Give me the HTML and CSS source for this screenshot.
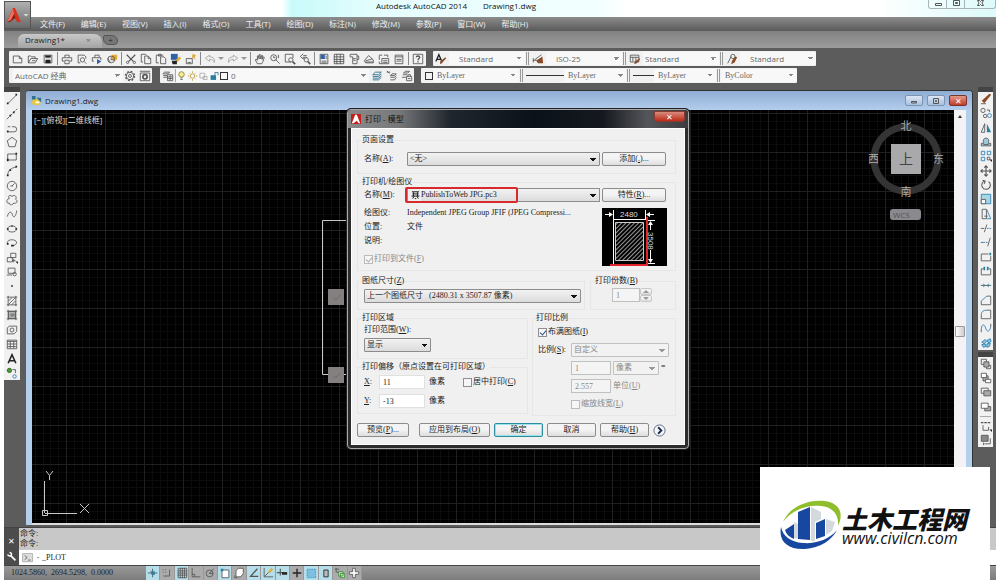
FILE: index.html
```html
<!DOCTYPE html>
<html lang="zh-CN">
<head>
  <meta charset="UTF-8">
  <meta name="viewport" content="width=device-width, initial-scale=1.0">
  <title>Autodesk AutoCAD 2014 - Drawing1.dwg</title>
  <link rel="stylesheet" href="styles.css">
</head>
<body>
  <div class="app">
    <button class="app-button" aria-label="应用程序菜单">
      <svg class="app-logo" viewBox="0 0 16 16"><path fill="#d8321f" d="M7 1h2l6 14h-4L8 7z"/><path fill="#8f150f" d="M7 1 1 15h3l5-4 2 4L8 7z"/><path fill="#f0705a" d="M7 1 1 15l4-2 3-6z"/></svg>
      <span class="caret light"></span>
    </button>

    <header class="titlebar">
      <div class="title"><span>Autodesk AutoCAD 2014</span><span>Drawing1.dwg</span></div>
      <div class="window-controls">
        <button aria-label="最小化"><svg viewBox="0 0 14 8"><path d="M4.500 3.500h6v2h-6z"/></svg></button>
        <button aria-label="还原"><svg viewBox="0 0 14 8"><path d="M4.500 .5h6v5h-6zM6.500 2.500h2v1h-2z"/></svg></button>
        <button class="wide" aria-label="关闭"><svg viewBox="0 0 14 8"><path d="M4.500 .5h2l1 1 1-1h2L9 3l1.500 2.500h-2l-1-1-1 1h-2L6 3z"/></svg></button>
      </div>
    </header>

    <nav class="menubar">
      <a href="#">文件(F)</a>
      <a href="#">编辑(E)</a>
      <a href="#">视图(V)</a>
      <a href="#">插入(I)</a>
      <a href="#">格式(O)</a>
      <a href="#">工具(T)</a>
      <a href="#">绘图(D)</a>
      <a href="#">标注(N)</a>
      <a href="#">修改(M)</a>
      <a href="#">参数(P)</a>
      <a href="#">窗口(W)</a>
      <a href="#">帮助(H)</a>
    </nav>

    <div class="tabs">
      <a class="tab" href="#">Drawing1*<span class="tab-close">×</span></a>
      <button class="tab-add" aria-label="新建">+</button>
    </div>

    <!-- Toolbars -->
    <div class="toolbars">
      <div class="toolbar-row">
        <div class="toolbar standard">
          <button aria-label="新建"><svg viewBox="0 0 14 14"><path d="M1.500 3.500h7l3 3v5h-10zM8.500 3.500v3h3"/></svg></button>
          <button aria-label="打开"><svg viewBox="0 0 14 14"><path d="M1.500 11.500v-8h3l1 1h4v2M1.500 11.500l3-5h8l-3 5zM6 9h4"/></svg></button>
          <button aria-label="保存"><svg viewBox="0 0 14 14"><path d="M2.500 2.500h9v9h-9zM4.500 2.500v3h5v-3"/><path class="dark" d="M4 8h6v4H4zM4 3h6v2H4z"/></svg></button>
          <i class="sep"></i>
          <button aria-label="打印"><svg viewBox="0 0 14 14"><path d="M4.500 5V2.500h5V5M3.500 9.500h-2v-4h11v4h-2M4.500 8.500h5v4h-5z"/></svg></button>
          <button aria-label="打印预览"><svg viewBox="0 0 14 14"><path d="M5 11.500H2.500v-9h7l2 2v2"/><circle cx="7.500" cy="8" r="2.500"/><path d="m9.500 10 2.500 2.500"/></svg></button>
          <button aria-label="发布"><svg viewBox="0 0 14 14"><path d="M4.500 5V2.500h5V5M3.500 9.500h-2v-4h10v3"/><path class="blue" d="m7 7 5 3-5 3z"/></svg></button>
          <button aria-label="三维打印"><svg viewBox="0 0 14 14"><path class="gold" d="M7 2h6v5l-3 3-3-3z"/><circle cx="6" cy="7.500" r="4"/><path d="M6 4v4h3M2 6l3 5"/></svg></button>
          <i class="sep"></i>
          <button aria-label="剪切"><svg viewBox="0 0 14 14"><path stroke-width="1.400" d="m2 2 8 8M12 2l-8 8"/><circle cx="3" cy="11" r="1.300"/><circle cx="11" cy="11" r="1.300"/></svg></button>
          <button aria-label="复制"><svg viewBox="0 0 14 14"><path d="M3.500 10.500h-2v-9h5l1 1M5.500 3.500h4l3 3v6h-7zM9.500 3.500v3h3"/></svg></button>
          <button aria-label="粘贴"><svg viewBox="0 0 14 14"><path d="M4.500 11.500h-3v-9h8M4 1.500h3v2H4zM6.500 4.500h4l2 2v6h-6z"/></svg></button>
          <button aria-label="特性匹配"><svg viewBox="0 0 14 14"><path class="blue" d="M1 1h8v7H1z"/><path class="gold" d="m6 9 5-5 2 2-5 5z"/><path class="dark" d="M2 9h6v4H3z"/></svg></button>
          <button aria-label="块编辑器"><svg viewBox="0 0 14 14"><path d="M1.500 6.500h7v6h-7zM3 11h4"/><path class="gold" d="m9 1 4 2-2 2 2 3-5-3z"/></svg></button>
          <i class="sep"></i>
          <button aria-label="放弃"><svg class="faded" viewBox="0 0 14 14"><path d="M6.500 2.500 1.500 6l5 3.500v-2c3 0 5 1 5.500 3.500 1-4-1-6.500-5.500-6.500z"/></svg></button>
          <button class="narrow" aria-label="放弃列表"><span class="caret faint"></span></button>
          <button aria-label="重做"><svg class="faded" viewBox="0 0 14 14"><path d="m7.500 2.500 5 3.500-5 3.500v-2C4.500 7.500 2.500 8.500 2 11c-1-4 1-6.500 5.500-6.500z"/></svg></button>
          <button class="narrow" aria-label="重做列表"><span class="caret faint"></span></button>
          <i class="sep"></i>
          <button aria-label="实时平移"><svg viewBox="0 0 14 14"><path d="M4 12.500 1.500 8 2.500 7 4 8.500v-5l1-.5 1 4V2l1-.5L8 7l1-4.500 1 .5-.5 4.500 1.500-3 1 .5-1.500 5-1.500 2.500z"/></svg></button>
          <button aria-label="实时缩放"><svg viewBox="0 0 14 14"><circle cx="5.500" cy="5.500" r="3.500"/><path d="m8 8 4.500 4.500M5.500 3.500v2h2M11 2v4"/></svg></button>
          <button aria-label="窗口缩放"><svg viewBox="0 0 14 14"><path d="M8 10.500H1.500v-9h9V6"/><circle cx="8" cy="8" r="2.500"/><path stroke-width="2" d="m10 10 3 3"/></svg></button>
          <button aria-label="缩放上一个"><svg viewBox="0 0 14 14"><path d="M5 1 1.500 4 5 7V5h4M5 3h4"/><circle cx="8.500" cy="8" r="2.500"/><path stroke-width="2" d="m10.500 10 2.500 3"/></svg></button>
          <i class="sep"></i>
          <button aria-label="特性"><svg viewBox="0 0 14 14"><path d="M2.500 1.500h9v11h-9z"/><path class="blue" d="M3 2h5v5H3z"/><path d="M4 9.500h6M4 11.500h6M9.500 3v4"/></svg></button>
          <button aria-label="设计中心"><svg viewBox="0 0 14 14"><path d="M1.500 1.500h11v11h-11zM1 4.500h12M1 7.500h12M1 10h12M4.500 1v12M8.500 1v12"/></svg></button>
          <button aria-label="工具选项板"><svg viewBox="0 0 14 14"><path d="M2.500 1.500h8v11h-5v-8h-3zM10.500 3.500h2v4h-2M6 6.500h3M6 8.500h3"/></svg></button>
          <button aria-label="图纸集"><svg viewBox="0 0 14 14"><path d="m1.500 9 5-6 5.500 5v3.500h-9zM3 9l8-2M3 10.500h9"/></svg></button>
          <button aria-label="标记集"><svg viewBox="0 0 14 14"><path d="M1.500 8V2.500H5M7 2.500h4.500V5M4.500 6.500h8v6h-8zM1.500 10v2.500h3M6 9h5M6 11h5"/></svg></button>
          <button aria-label="计算器"><svg viewBox="0 0 14 14"><path d="M2.500 2.500h9v10h-9zM2.500 4.500h9M4 7.500h6M4 9.500h6"/></svg></button>
          <i class="sep"></i>
          <button aria-label="帮助"><svg viewBox="0 0 14 14"><path d="M1.500 1.500h11v11h-11z"/><path stroke-width="1.500" d="M5 5c0-2 4-2 4 0 0 1.500-2 1.500-2 3.500M7 9.500v1.500"/></svg></button>
        </div>
        <div class="toolbar styles">
          <button aria-label="文字样式"><svg viewBox="0 0 14 14"><path stroke="#222" stroke-width="1.500" d="M1 10 4.500 2 8 10M2.500 7.500h4"/><path class="brown" d="m6 10 6-5 1 1-5 6-2 1z"/></svg></button>
          <select aria-label="文字样式"><option>Standard</option></select>
          <i class="grip"></i>
          <button aria-label="标注样式"><svg viewBox="0 0 14 14"><path d="M1 8.500h8M1.500 6v5M3 8l8-6"/><path class="brown" d="M5 9 12 4l1 8H7z"/></svg></button>
          <select aria-label="标注样式"><option>ISO-25</option></select>
          <i class="grip"></i>
          <button aria-label="表格样式"><svg viewBox="0 0 14 14"><path d="M1.500 2.500h10v8h-10zM1.500 5h10M4.500 5v5M8 5v5"/><path class="brown" d="m7 10 5-4 1 1-4 5-3 1z"/></svg></button>
          <select class="flush" aria-label="表格样式"><option>Standard</option></select>
          <i class="grip"></i>
          <button aria-label="多重引线样式"><svg viewBox="0 0 14 14"><path d="m2 12 4-8"/><circle cx="8" cy="4" r="2.500"/><path class="brown" d="m7 9 4-5 2 1-3 6-4 2z"/></svg></button>
          <select aria-label="多重引线样式"><option>Standard</option></select>
        </div>
      </div>

      <div class="toolbar-row">
        <div class="toolbar workspaces">
          <select class="flush" aria-label="工作空间"><option>AutoCAD 经典</option></select>
          <button aria-label="工作空间设置"><svg viewBox="0 0 14 14"><circle cx="7" cy="7" r="5.300" stroke-dasharray="2.200 1.960" stroke-width="1.500"/><circle cx="7" cy="7" r="4.300"/><circle cx="7" cy="7" r="1.700"/></svg></button>
          <button aria-label="我的工作空间"><svg viewBox="0 0 14 14"><path d="M1.500 3.500h11v9h-11zM1 1.500h12"/><circle cx="7" cy="8" r="2.500" stroke-width="2"/></svg></button>
        </div>
        <div class="toolbar layers">
          <button aria-label="图层特性"><svg viewBox="0 0 14 14"><path d="M3 2.500h6l-2 2H1zM1.500 6.500H6M1.500 8.500H6M6.500 5.500h6v7h-6zM6.500 8h6M6.500 10h6M9.500 6v6"/></svg></button>
          <div class="layer-combo">
            <svg viewBox="0 0 14 14"><circle cx="7" cy="5" r="3.500" fill="#f5ec9a" stroke="#867a22"/><path d="M5.500 9.500h3M5.500 11.500h3"/></svg>
            <svg viewBox="0 0 14 14"><circle cx="7" cy="7" r="2.800" stroke="#b8932c"/><path stroke="#b8932c" d="M7 1v2M7 11v2M1 7h2M11 7h2M3 3l1 1M10 10l1 1M11 3l-1 1M4 10l-1 1"/></svg>
            <svg class="faded" viewBox="0 0 14 14"><path d="M2.500 3.500h6v6h-6zM6.500 7.500h5v4h-5z"/></svg>
            <svg viewBox="0 0 14 14"><path class="teal" d="M2 6h7v6H2z"/><path stroke="#246b88" d="M7.500 6V2.500h4V6"/></svg>
            <i class="swatch"></i>
            <select aria-label="图层"><option>0</option></select>
          </div>
          <button aria-label="置为当前"><svg viewBox="0 0 14 14"><path stroke="#246b88" d="M5 2.500h7l-3 3H2zM2 7.500h7l3-3M2 9.500h7l3-3M2 11.500h7l3-3"/></svg></button>
          <button aria-label="上一个图层"><svg viewBox="0 0 14 14"><path d="M1 2.500h4M1 1l3 3M7 4.500h5l-2 2H5zM5 8.500h5l2-2M5 11.500h5l2-3"/></svg></button>
          <button aria-label="图层状态"><svg viewBox="0 0 14 14"><path d="M5 1.500h5l-2 2H3zM2 5.500h5M1 8.500h5M6.500 7.500h6v5h-6zM8 7V5.500h3V7M8 10h3"/></svg></button>
        </div>
        <div class="toolbar props">
          <i class="swatch"></i>
          <select class="p-color" aria-label="颜色"><option>ByLayer</option></select>
          <i class="grip"></i>
          <i class="line long"></i>
          <select class="p-line" aria-label="线型"><option>ByLayer</option></select>
          <i class="grip"></i>
          <i class="line"></i>
          <select class="p-weight" aria-label="线宽"><option>ByLayer</option></select>
          <i class="grip"></i>
          <select class="p-plot" aria-label="打印样式"><option>ByColor</option></select>
        </div>
      </div>
    </div>

    <main class="workspace">
      <aside class="palette draw">
        <button aria-label="直线"><svg viewBox="0 0 14 14"><path d="M2.500 12 12 2.500"/><path class="dark" d="M1 11h2v2H1zM11 1h2v2h-2z"/></svg></button>
        <button aria-label="构造线"><svg viewBox="0 0 14 14"><path stroke-dasharray="4 1" d="M1 13 13 1"/><path class="dark" d="M4 8h2v2H4zM8 4h2v2H8z"/></svg></button>
        <button aria-label="多段线"><svg viewBox="0 0 14 14"><path d="M1.500 11.500h8a3 3 0 0 0 0-6H7M2 5.500h3"/><path class="dark" d="M1 10h2v2H1z"/></svg></button>
        <button aria-label="正多边形"><svg viewBox="0 0 14 14"><path d="m7 1.500 5.500 4-2 7h-7l-2-7z"/></svg></button>
        <button aria-label="矩形"><svg viewBox="0 0 14 14"><path d="M2 3.500h10v7H2z"/><path class="dark" d="M1 9h2v3H1zM11 2h2v2h-2z"/></svg></button>
        <button aria-label="圆弧"><svg viewBox="0 0 14 14"><path d="M2 12.500c0-6 4-9.500 10-10"/><path class="dark" d="M1 11h2v2H1zM4 5h2v2H4zM11 1h2v2h-2z"/></svg></button>
        <button aria-label="圆"><svg viewBox="0 0 14 14"><circle cx="7" cy="7" r="5.500"/><path d="m7 7 3-3M5 7h3"/></svg></button>
        <button aria-label="修订云线"><svg viewBox="0 0 14 14"><path d="M4 5C1 3 5 0 7 3c2-3 7 0 4 3 4 2 1 6-2 4.500-1 3-6 2.500-5 0C0 12 0 6 4 5z"/></svg></button>
        <button aria-label="样条曲线"><svg viewBox="0 0 14 14"><path d="M1.500 10c2-7 5-6 6-2s4 3 5-5"/></svg></button>
        <button aria-label="椭圆"><svg viewBox="0 0 14 14"><ellipse cx="7" cy="7" rx="5" ry="3.500"/><path class="dark" d="M1 6h2v2H1zM11 6h2v2h-2zM6 3h2v1H6z"/></svg></button>
        <button aria-label="椭圆弧"><svg viewBox="0 0 14 14"><path d="M2 8C0 4 6 2.500 9 3.500c5 1 4 6-1 6.500"/><path class="dark" d="M6 9h3v2H6zM1 7h2v2H1z"/></svg></button>
        <button aria-label="插入块"><svg viewBox="0 0 14 14"><path d="M5.500 1.500h6v5h-6zM1.500 6.500h6v5h-6zM9 8v4M7 10h4"/><path class="dark" d="M11 11h3v3z"/></svg></button>
        <button aria-label="创建块"><svg viewBox="0 0 14 14"><path d="M2.500 2.500h8v6h-8zM1 10.500h6"/><circle cx="10" cy="9.500" r="2"/></svg></button>
        <button aria-label="点"><svg viewBox="0 0 14 14"><path class="dark" d="M6 6h2v2H6z"/></svg></button>
        <button aria-label="图案填充"><svg viewBox="0 0 14 14"><path d="M2.500 1v12M11.500 1v12M1 2.500h12M1 11.500h12M3 7l4-4M3 11l8-8M7 11l4-4"/></svg></button>
        <button aria-label="渐变色"><svg viewBox="0 0 14 14"><path fill="#bbb" d="M3 3h8v8H3z"/><path d="M2.500 1v12M11.500 1v12M1 2.500h12M1 11.500h12M5 6h5M5 8h5"/></svg></button>
        <button aria-label="面域"><svg viewBox="0 0 14 14"><path d="M1.500 4.500 4 2.500h8.500v6l-3 3h-8z"/><circle cx="7" cy="7" r="2.300"/></svg></button>
        <button aria-label="表格"><svg viewBox="0 0 14 14"><path d="M1.500 2.500h11v10h-11zM1.500 4h11M1.500 7h11M1.500 10h11M5 4v8M9 4v8"/></svg></button>
        <button aria-label="多行文字"><svg viewBox="0 0 14 14"><path stroke="#222" stroke-width="1.800" d="M2.500 12 7 2l4.500 10M4 9h6"/></svg></button>
        <button aria-label="添加选定对象"><svg viewBox="0 0 14 14"><circle cx="4" cy="4" r="2.500" fill="#4b9b3a" stroke="#2c6320"/><circle cx="10" cy="11" r="2" stroke="#2a7fb5"/><path d="M7.500 3H11v4"/></svg></button>
      </aside>

      <section class="doc">
        <div class="doc-title">
          <svg class="doc-icon" viewBox="0 0 12 12"><path fill="#e8c83a" d="M2 4h5l4 4-2 3H3L1 9z"/><path fill="#2f6f8f" d="M1 1h4v4H1zM6 3h5v5z"/><path fill="#fff" d="M5 7h4v2H5z"/></svg>
          <span>Drawing1.dwg</span>
          <div class="doc-controls">
            <button aria-label="最小化"><svg viewBox="0 0 14 8"><path d="M4.500 4.500h5v1.500h-5z"/></svg></button>
            <button aria-label="最大化"><svg viewBox="0 0 14 8"><path d="M4.500 1.500h5v5h-5zM6.500 3.500h1v1h-1z"/></svg></button>
            <button class="close" aria-label="关闭">✕</button>
          </div>
        </div>
        <div class="doc-body">
          <div class="canvas">
            <svg class="drawing" width="100%" height="100%">
              <defs>
                <pattern id="grid" x="-5" y="3" width="39" height="39" patternUnits="userSpaceOnUse">
                  <path stroke="#0b0c0c" d="M8.500 0v39M16.500 0v39M23.500 0v39M31.500 0v39M0 8.500h39M0 16.500h39M0 23.500h39M0 31.500h39"/>
                  <path stroke="#1f2121" d="M.5 0v39M0 .5h39"/>
                </pattern>
              </defs>
              <rect width="100%" height="100%" fill="url(#grid)"/>
              <path stroke="#c8c8c8" fill="none" d="M330 110.500h-39.500v154H330"/>
              <path fill="#85807f" d="M296 179h16v16h-16zM296 257h16v16h-16z"/>
              <path stroke="#726a6a" fill="none" d="m301 188 3 2 4-5M301 266l3 2 4-5"/>
            </svg>
            <div class="view-label">[−][俯视][二维线框]</div>
            <div class="viewcube">
              <span class="north">北</span>
              <span>西</span>
              <button class="face">上</button>
              <span>东</span>
              <span class="south">南</span>
            </div>
            <button class="wcs">WCS</button>
            <svg class="ucs" viewBox="0 0 56 52"><path fill="none" stroke="#c8c8c8" d="M7.500 48.500h-5v-5h5zM5 46.500h32M4.500 46V14M6 4l3.500 4.500L13 4M9.500 8.500V13M40 37l9 9M49 37l-9 9"/></svg>
          </div>
          <div class="scrollbar"><i class="scroll-up"></i><i class="thumb"></i></div>
        </div>
      </section>

      <aside class="palettes-right">
        <div class="palette modify">
          <button aria-label="删除"><svg viewBox="0 0 14 14"><path class="brown" d="m2 9 3 3 8-10-2-1z"/><path d="M1 12.500h6"/></svg></button>
          <button aria-label="复制对象"><svg viewBox="0 0 14 14"><circle cx="3.500" cy="4" r="2.500"/><circle cx="6" cy="10.500" r="2"/><circle cx="11" cy="10" r="2.300" stroke="#2a7fb5"/><path d="M8 3.500h3V6"/></svg></button>
          <button aria-label="镜像"><svg viewBox="0 0 14 14"><path d="M5.500 2v10h-4z"/><path class="teal" d="M8 2v10h5z"/></svg></button>
          <button aria-label="偏移"><svg viewBox="0 0 14 14"><path fill="#9cc8dc" d="M1.500 11.500v-3h3C3 5 4 2.500 7 2.500S11 5 9.500 8.500h3v3z"/><path d="M4 10h6"/></svg></button>
          <button aria-label="阵列"><svg viewBox="0 0 14 14"><path stroke="#2a7fb5" d="M1.500 1.500h4v4h-4zM8.500 1.500h4v4h-4zM1.500 8.500h4v4h-4z"/><path d="M8.500 8.500h3v3h-3z"/><path class="dark" d="M11 11h3v3z"/></svg></button>
          <button aria-label="移动"><svg viewBox="0 0 14 14"><path stroke-width="1.300" d="M7 1v12M1 7h12M5 3l2-2 2 2M5 11l2 2 2-2M3 5 1 7l2 2M11 5l2 2-2 2"/></svg></button>
          <button aria-label="旋转"><svg viewBox="0 0 14 14"><path stroke-width="1.200" d="M5 2.500a5 5 0 1 0 5 .5M3 1.500l3 1-1 3"/></svg></button>
          <button aria-label="缩放"><svg viewBox="0 0 14 14"><path fill="#a8d4e4" stroke="#2a7fb5" d="M1.500 1.500h11v11h-11z"/><path fill="#fff" d="M1.500 7.500h5v5h-5z"/></svg></button>
          <button aria-label="拉伸"><svg viewBox="0 0 14 14"><path d="M2.500 1.500h5v11h-5z"/><path stroke="#2a7fb5" d="m8 2 4.500 10.500H8"/><path d="M5 9.500h4"/></svg></button>
          <button aria-label="修剪"><svg viewBox="0 0 14 14"><path d="M1 7.500h4M5 12l3-9"/><path stroke="#2a7fb5" stroke-dasharray="2 1" d="M8 7.500h6"/></svg></button>
          <button aria-label="延伸"><svg viewBox="0 0 14 14"><path d="m9 12 3-10M1 7.500h3"/><path stroke="#2a7fb5" stroke-dasharray="2 1" d="M4 7.500h6"/></svg></button>
          <button aria-label="打断于点"><svg viewBox="0 0 14 14"><path d="M10 3.500H1.500v8h11V6"/><path class="teal" d="M11 2h2v3h-2z"/></svg></button>
          <button aria-label="打断"><svg viewBox="0 0 14 14"><path d="M4 4.500H1.500v7h11v-7H10"/><path class="teal" d="M4 2h2v4H4zM8 2h2v4H8z"/></svg></button>
          <button aria-label="合并"><svg viewBox="0 0 14 14"><path d="M1 7.500h12"/><path class="teal" d="M4 5v5l2-2.500zM10 5v5L8 7.500z"/></svg></button>
          <button aria-label="倒角"><svg viewBox="0 0 14 14"><path d="M1.500 8v4.500h11v-10H8"/><path stroke="#2a7fb5" d="M1.500 8 8 2.500"/></svg></button>
          <button aria-label="圆角"><svg viewBox="0 0 14 14"><path d="M1.500 8v4.500h11v-10H8"/><path stroke="#2a7fb5" d="M1.500 8q0-5.500 6.500-5.500"/></svg></button>
          <button aria-label="光顺曲线"><svg viewBox="0 0 14 14"><path d="M1.500 12V8M12.500 2v4"/><path stroke="#2a7fb5" d="M1.500 8c1-7 4-5 5-1s4 6 6-1"/></svg></button>
          <button aria-label="分解"><svg viewBox="0 0 14 14"><path fill="#8cc4dc" stroke="#2a7fb5" d="M2 6l4-3 2 2-3 3zM8 4l4-2 1 3-3 2zM2 9l4-1 1 3-3 1zM8 8l4-1-1 4-3 1z"/></svg></button>
        </div>
        <div class="palette order">
          <button aria-label="前置"><svg viewBox="0 0 14 14"><path d="M1.500 1.500h6v6h-6zM7.500 8.500h5v4h-5z"/><path fill="#aaa" d="M4.500 4.500h6v6h-6z"/></svg></button>
          <button aria-label="后置"><svg viewBox="0 0 14 14"><path fill="#aaa" d="M3.500 4.500h6v6h-6z"/><path fill="#fff" d="M1.500 1.500h6v5h-6zM6.500 8.500h6v4h-6z"/></svg></button>
          <button aria-label="置于对象之上"><svg viewBox="0 0 14 14"><path d="M1.500 2.500h8v6h-8z"/><path fill="#aaa" d="M4.500 5.500h8v6h-8z"/></svg></button>
          <button aria-label="置于对象之下"><svg viewBox="0 0 14 14"><path fill="#aaa" d="M5.500 6.500h7v5h-7z"/><path fill="#fff" d="M1.500 2.500h8v6h-8z"/></svg></button>
          <i class="hsep"></i>
          <button aria-label="文字前置"><svg viewBox="0 0 14 14"><path stroke-width="1.500" d="M1 3h3M5 3h3M9 3h3"/><path d="M3.500 6v6H10V8"/><path class="dark" d="M11 11h3v3z"/></svg></button>
          <button aria-label="图案填充后置"><svg viewBox="0 0 14 14"><path fill="#888" d="M1.500 1.500h8v7h-8z"/><path d="M5 11.500h7V5M4 10v3"/></svg></button>
        </div>
      </aside>
    </main>

    <section class="command">
      <div class="command-side">
        <button aria-label="关闭">✕</button>
        <button aria-label="自定义"><svg viewBox="0 0 14 14"><path stroke="#fff" stroke-width="2.200" d="m6 6 6 6"/><path stroke="#fff" stroke-width="1.800" d="M2 4.500C3 7 7 7 7 4.500 7 3 6 2 4.500 2"/></svg></button>
      </div>
      <div class="command-main">
        <div class="history"><div>命令:</div><div>命令:</div></div>
        <div class="prompt">
          <svg viewBox="0 0 14 12"><path fill="#ddd" stroke="#aaa" d="M.5 .5h12v10H.5z"/><path d="m3 3 3 2.500L3 8M7 8.500h3"/></svg>
          <span class="caret faint"></span>
          <input type="text" aria-label="命令行" value="_PLOT">
        </div>
      </div>
    </section>

    <footer class="statusbar">
      <span class="coords">1024.5860,  2694.5298,  0.0000</span>
      <div class="toggles">
        <button class="on" aria-label="推断约束"><svg viewBox="0 0 14 14"><path d="M6.500 2v10M1 7h11M4 5l5 4"/><path class="teal" d="M5 5h4v4H5z"/></svg></button>
        <button aria-label="捕捉模式"><svg viewBox="0 0 14 14"><path stroke-dasharray="1 2" d="M2 3h5M2 6h5"/><path d="M3 10.500h7V3"/></svg></button>
        <button class="on" aria-label="栅格显示"><svg viewBox="0 0 14 14"><path d="M2.500 1.500h10v11h-10zM2 4.500h11M2 7h11M2 9.500h11M5 1v12M7.500 1v12M10 1v12"/></svg></button>
        <button aria-label="正交模式"><svg viewBox="0 0 14 14"><path d="M2.500 1v10.500H12M2.500 8.500h3v3"/></svg></button>
        <button aria-label="极轴追踪"><svg viewBox="0 0 14 14"><circle cx="6.500" cy="7.500" r="4"/><path d="m6 8 5-6M6 7.500h5"/></svg></button>
        <button class="on" aria-label="对象捕捉"><svg viewBox="0 0 14 14"><path fill="#fff" d="M3.500 3.500h8v9h-8z"/><path class="teal" d="M2 2h3v3H2z"/></svg></button>
        <button aria-label="三维对象捕捉"><svg viewBox="0 0 14 14"><path fill="#fff" d="M3.500 4.500 6 1.500h6v6l-3 4H3.500z"/><path d="M2 10v2.500h3"/></svg></button>
        <button class="on" aria-label="对象捕捉追踪"><svg viewBox="0 0 14 14"><path stroke-width="1.500" d="M11 2 3 11h9"/></svg></button>
        <button class="on" aria-label="动态 UCS"><svg viewBox="0 0 14 14"><path d="M2.500 1v10.500H13M3 11l5-5"/><path class="gold" d="m7 6 4-5 2 2-4 4z"/></svg></button>
        <button class="on" aria-label="动态输入"><svg viewBox="0 0 14 14"><path stroke-width="1.300" d="M5 2v8M1 6.500h8"/><path class="dark" d="M7 6h6v3H7z"/></svg></button>
        <button aria-label="线宽"><svg viewBox="0 0 14 14"><path stroke="#222" stroke-width="1.600" d="M7 2v10M2 7h10"/></svg></button>
        <button class="on" aria-label="透明度"><svg viewBox="0 0 14 14"><path fill="#7cc0e0" stroke="#2a7fb5" stroke-dasharray="1 1" d="M2.500 2.500h10v10h-10z"/></svg></button>
        <button class="on" aria-label="快捷特性"><svg viewBox="0 0 14 14"><path fill="#bbb" stroke="#222" d="M4.500 3.500h5v8h-5z"/></svg></button>
        <button aria-label="选择循环"><svg viewBox="0 0 14 14"><path d="M1 2.500h5M2.500 1v5h5"/><path fill="#d5ecd0" stroke="#3b8a32" d="M5.500 5.500h5v5h-5zM7.500 7.500h5v5h-5z"/></svg></button>
        <button aria-label="注释监视器"><svg viewBox="0 0 14 14"><path fill="#fff" d="M5.500 1.500h3v4h4v3h-4v4h-3v-4h-4v-3h4z"/></svg></button>
      </div>
    </footer>
  </div>

  <!-- Plot dialog -->
  <form class="dialog">
    <div class="dialog-title">
      <svg class="dialog-logo" viewBox="0 0 12 12"><path fill="#c3201a" d="M0 0h12v12H0z"/><path fill="#fff" d="M5 1h2l4 10H9L7 8 3 11H1z"/></svg>
      <span>打印 - 模型</span>
      <button type="button" class="dialog-close" aria-label="关闭">✕</button>
    </div>
    <div class="dialog-body">
      <fieldset class="page-setup">
        <legend>页面设置</legend>
        <div class="form-grid">
          <label for="setup">名称(<u>A</u>):</label>
          <select id="setup"><option>&lt;无&gt;</option></select>
          <button type="button">添加(<u>.</u>)...</button>
        </div>
      </fieldset>

      <fieldset class="printer">
        <legend>打印机/绘图仪</legend>
        <div class="form-grid">
          <label for="printer">名称(<u>M</u>):</label>
          <div class="printer-select">
            <svg viewBox="0 0 14 14"><path stroke="#111" stroke-width="1.300" d="M2 2.500h10M3 5.500h8M1.500 8.500h11M4 3v6M10 3v6M3 12l2-3M11 12 9 9M6 12h2"/></svg>
            <select id="printer"><option>PublishToWeb JPG.pc3</option></select>
            <i class="highlight"></i>
          </div>
          <button type="button">特性(<u>R</u>)...</button>
        </div>
        <div class="printer-info">
          <div class="info">
            <div class="info-row"><span>绘图仪:</span><span>Independent JPEG Group JFIF (JPEG Compressi...</span></div>
            <div class="info-row"><span>位置:</span><span>文件</span></div>
            <div class="info-row"><span>说明:</span><span></span></div>
            <label class="check disabled"><input type="checkbox" checked disabled>打印到文件(<u>F</u>)</label>
          </div>
          <svg class="preview" viewBox="0 0 65 58">
            <defs><pattern id="hatch" width="3" height="3" patternUnits="userSpaceOnUse" patternTransform="rotate(45)"><path stroke="#999" d="M.5 0v3"/></pattern></defs>
            <path fill="#000" stroke="none" d="M0 0h65v58H0z"/>
            <path fill="url(#hatch)" stroke="#ccc" d="M13.500 14.500h28v38h-28z"/>
            <path fill="none" stroke="#fff" d="M11.500 2v54M43.500 2v10M3 6.500h6M46 6.500h6M11 11.500h32M46 12.500h7M46 55.500h7M48.500 14v8M48.500 42v12"/>
            <path fill="#fff" stroke="none" d="m7 4 4 2.500L7 9zM48 4l-4 2.500L48 9zM46 17l2.500-4 2.500 4zM46 51l2.500 4 2.500-4z"/>
            <path fill="none" stroke="#e0242c" stroke-width="2" d="M8 57h38M45 9v48"/>
            <text x="18" y="9">2480</text>
            <text transform="translate(46 24) rotate(90)" x="0" y="0">3508</text>
          </svg>
        </div>
      </fieldset>

      <div class="paper-row">
        <fieldset>
          <legend>图纸尺寸(<u>Z</u>)</legend>
          <select class="paper" aria-label="图纸尺寸"><option>上一个图纸尺寸&nbsp;&nbsp; (2480.31 x 3507.87 像素)</option></select>
        </fieldset>
        <fieldset>
          <legend>打印份数(<u>B</u>)</legend>
          <div class="spinner">
            <input type="text" value="1" disabled aria-label="打印份数">
            <div class="spin-buttons"><button type="button" disabled aria-label="增加"><span class="caret up faint"></span></button><button type="button" disabled aria-label="减少"><span class="caret faint"></span></button></div>
          </div>
        </fieldset>
      </div>

      <div class="area-row">
        <div class="area-left">
          <fieldset class="area">
            <legend>打印区域</legend>
            <label for="range">打印范围(<u>W</u>):</label>
            <select id="range"><option>显示</option></select>
          </fieldset>
          <fieldset class="offset">
            <legend>打印偏移（原点设置在可打印区域）</legend>
            <div class="offset-row">
              <label for="off-x"><u>X</u>:</label><input type="text" id="off-x" value="11"><span>像素</span>
              <label class="check center"><input type="checkbox">居中打印(<u>C</u>)</label>
            </div>
            <div class="offset-row">
              <label for="off-y"><u>Y</u>:</label><input type="text" id="off-y" value="-13"><span>像素</span>
            </div>
          </fieldset>
        </div>
        <fieldset class="scale">
          <legend>打印比例</legend>
          <label class="check"><input type="checkbox" checked>布满图纸(<u>I</u>)</label>
          <div class="scale-grid">
            <label for="ratio">比例(<u>S</u>):</label>
            <select id="ratio" class="span" disabled><option>自定义</option></select>
            <input type="text" class="col2" value="1" disabled aria-label="图纸单位">
            <div class="unit"><select disabled aria-label="单位"><option>像素</option></select><b>=</b></div>
            <input type="text" class="col2" id="units" value="2.557" disabled>
            <label for="units" class="disabled">单位(<u>U</u>)</label>
            <label class="check disabled col2 span"><input type="checkbox" disabled>缩放线宽(<u>L</u>)</label>
          </div>
        </fieldset>
      </div>

      <div class="buttons">
        <button type="button" class="w-preview">预览(<u>P</u>)...</button>
        <button type="button" class="w-apply">应用到布局(<u>O</u>)</button>
        <button type="submit" class="default">确定</button>
        <button type="button">取消</button>
        <button type="button">帮助(<u>H</u>)</button>
        <button type="button" class="more" aria-label="更多选项"><svg viewBox="0 0 14 14"><circle cx="7" cy="7" r="6" fill="#f4f6fa" stroke="#56627c"/><path stroke="#1d2c54" stroke-width="2" d="m5.500 3.500 3.500 3.500-3.500 3.500"/></svg></button>
      </div>
    </div>
  </form>

  <div class="watermark">
    <svg class="civil-logo" viewBox="0 0 62 50">
      <path fill="#8fbe2c" d="M3 22C9 7 28-1 45 1c15 2 19 13 13 25 1-11-5-19-17-20C26 4 11 11 3 22z"/>
      <path fill="#17479e" d="M1 27c-3 15 8 23 24 22 15-1 27-9 32-19C49 40 35 44 23 43 10 42 3 36 1 27z"/>
      <path fill="#d4d9df" d="m31 7 10 5v7l-6 3v19h-4zM14 22l4 2v15l-4-1zM46 19l9 3-3 9-6 4z"/>
      <path fill="#17479e" d="M5 30l9-6v15c-5-2-8-5-9-9zM18 12l12-5v33l-12-1zM36 23l9-4v17l-9 3z"/>
    </svg>
    <div class="watermark-text">
      <strong>土木工程网</strong>
      <span>www.civilcn.com</span>
    </div>
  </div>
</body>
</html>
```

FILE: styles.css
```css
:root {
  --frame: #5c5c5c;
  --tool: #f1f1f1;
  --ink: #555;
  --ui: "Open Sans", "Noto Sans CJK SC", sans-serif;
  --song: "Liberation Serif", "Noto Sans CJK SC", serif;
}

* {
  box-sizing: border-box;
}

body {
  margin: 0;
  background: #fff;
  font-family: var(--ui);
  font-size: 8px;
  line-height: 12px;
  color: #222;
  position: relative;
}

button, select, input {
  font: inherit;
  color: inherit;
  margin: 0;
  padding: 0;
  border: none;
  border-radius: 0;
  background: none;
  min-width: 0;
}

button {
  display: flex;
  align-items: center;
  justify-content: center;
}

a {
  color: inherit;
  text-decoration: none;
}

svg {
  display: block;
  flex: none;
  fill: none;
  stroke: var(--ink);
}

svg .dark { fill: #222; stroke: none; }
svg .blue { fill: #2f62a8; stroke: none; }
svg .teal { fill: #2a7f9f; stroke: none; }
svg .gold { fill: #e2ac34; stroke: none; }
svg .brown { fill: #8a4a26; stroke: none; }
.faded { opacity: 0.5; }

.app-logo *, .doc-icon *, .dialog-logo *, .civil-logo * { stroke: none; }

select {
  appearance: none;
  background: conic-gradient(from -45deg at 50% 100%, #888 90deg, transparent 0) no-repeat right 3px center / 6px 3px;
}

.caret {
  width: 6px;
  height: 3px;
  background: #222;
  clip-path: polygon(0 0, 100% 0, 50% 100%);
}

.caret.light { background: #ddd; }
.caret.faint { background: #999; }
.caret.up { transform: rotate(180deg); }

.app {
  min-height: 100vh;
  margin: 0 4px;
  padding-bottom: 2px;
  display: flex;
  flex-direction: column;
  position: relative;
}

.app-button {
  position: absolute;
  z-index: 1;
  left: 0;
  top: 1px;
  width: 27px;
  height: 28px;
  gap: 1px;
  border: 1px solid #555;
  background: linear-gradient(#b0b0b0, #6a6a6a);
}

.app-logo {
  width: 16px;
  height: 18px;
}

.titlebar {
  height: 17px;
  display: flex;
  justify-content: center;
  position: relative;
  background: linear-gradient(90deg, #fff 28%, #c9fafa 29%, #e6fdfd 38%, #f2ffff 60%, #fff 63%, #fff 88%, #dcfbfa);
}

.title {
  display: flex;
  gap: 16px;
  padding-right: 88px;
  font-size: 8px;
  color: #111;
}

.window-controls {
  position: absolute;
  right: 0;
  top: 0;
  display: flex;
  border: 1px solid #aab4b8;
  border-top: none;
  border-radius: 0 0 3px 3px;
}

.window-controls button {
  width: 18px;
  height: 8px;
  border-right: 1px solid #aab4b8;
}

.window-controls .wide {
  width: 30px;
  border: none;
}

.window-controls svg, .doc-controls svg {
  width: 14px;
  height: 8px;
}

.menubar {
  height: 14px;
  padding-left: 36px;
  display: flex;
  align-items: center;
  gap: 16px;
  background: linear-gradient(#8c8c8c, #5a5a5a);
  color: #eee;
}

.tabs {
  height: 17px;
  padding: 3px 0 0 14px;
  display: flex;
  background: linear-gradient(#828282, #9c9c9c);
}

.tab {
  width: 84px;
  padding-left: 7px;
  display: flex;
  justify-content: space-between;
  border-radius: 6px 8px 0 0;
  background: linear-gradient(#c8c8c8, #a4a4a4);
}

.tab-close {
  width: 16px;
  color: #666;
}

.tab-add {
  width: 15px;
  height: 10px;
  margin: 1px 0 0 1px;
  border: 1px solid #555;
  border-radius: 2px 6px 4px 6px;
  background: #777;
}

/* Toolbars */
.toolbars {
  padding: 3px 4px 3px 5px;
  display: flex;
  flex-direction: column;
  gap: 2px;
  background: var(--frame);
}

.toolbar-row {
  display: flex;
  gap: 7px;
}

.toolbar {
  height: 15px;
  display: flex;
  align-items: center;
  background: var(--tool);
  border-radius: 1px;
  color: #666;
}

.toolbar button {
  width: 15px;
  height: 15px;
}

.toolbar svg {
  width: 12px;
  height: 12px;
}

.toolbar .narrow {
  width: 8px;
}

.toolbar select {
  height: 13px;
  background-color: #f8f8f8;
}

.sep {
  width: 1px;
  height: 13px;
  margin: 0 1px 0 2px;
  background: #888;
}

.standard {
  padding: 0 1px;
}

.grip {
  width: 3px;
  height: 13px;
  margin: 0 1px;
  border: 1px solid #999;
  border-width: 0 1px;
}

.styles select {
  width: 76px;
  padding-left: 10px;
  margin-left: 1px;
}

.styles select.flush, .workspaces .flush {
  padding-left: 2px;
}

.workspaces select {
  width: 112px;
}

.workspaces {
  width: 143px;
  padding-left: 4px;
}

.layers {
  margin-left: 1px;
}

.layer-combo {
  display: flex;
  align-items: center;
  background: #f8f8f8;
  border-left: 1px solid #aaa;
}

.layer-combo svg {
  width: 11px;
}

.layer-combo select {
  width: 141px;
  padding-left: 3px;
}

.swatch {
  width: 8px;
  height: 8px;
  border: 1px solid #333;
}

.line {
  width: 21px;
  height: 1px;
  margin-left: 2px;
  background: #333;
}

.line.long {
  width: 38px;
}

.props {
  padding-left: 4px;
  font-family: var(--song);
}

.props select { padding-left: 4px; }
.p-color { width: 86px; }
.p-line { width: 62px; }
.p-weight { width: 62px; }
.p-plot { width: 76px; }

/* Workspace */
.workspace {
  flex: 1;
  display: flex;
  padding: 1px 3px 2px 0;
  background: var(--frame);
}

.palette {
  display: flex;
  flex-direction: column;
  background: var(--tool);
  border-top: 5px solid #444;
}

.palette button {
  flex: 1;
  min-height: 0;
}

.palette svg {
  width: 12px;
  height: 12px;
}

.draw {
  width: 16px;
  height: 293px;
  margin-right: 6px;
}

.doc {
  flex: 1;
  margin-top: 3px;
  display: flex;
  flex-direction: column;
  border: 1px solid #333;
  border-width: 1px 1px 0 0;
  border-radius: 4px 4px 0 0;
  background: #b4cfec;
}

.doc-title {
  height: 19px;
  padding: 0 5px;
  display: flex;
  align-items: center;
  gap: 3px;
  border-radius: 3px 3px 0 0;
  background: linear-gradient(#8fadd3, #b3cdec);
  font-size: 8px;
}

.doc-icon {
  width: 11px;
  height: 11px;
}

.doc-controls {
  margin-left: auto;
  display: flex;
  gap: 4px;
}

.doc-controls button {
  width: 18px;
  height: 11px;
  border: 1px solid #7d93b4;
  border-radius: 2px;
  background: linear-gradient(#dbe7f5, #a9c0de);
}

.doc-controls .close {
  border-color: #7c3230;
  background: linear-gradient(#e39a8c, #c23b26);
  color: #fff;
}

.doc-body {
  flex: 1;
  display: flex;
  margin: 0 6px;
  border-bottom: 2px solid #ddd;
}

.canvas {
  flex: 1;
  position: relative;
  background: #000;
  overflow: hidden;
}

.drawing {
  position: absolute;
  inset: 0;
}

.drawing rect { stroke: none; }

.drawing path[fill^="#"] { stroke: none; }

.view-label {
  position: absolute;
  left: 2px;
  top: 4px;
  color: #ddd;
}

.viewcube {
  position: absolute;
  top: 9px;
  right: 8px;
  width: 80px;
  height: 80px;
  display: grid;
  grid-template-columns: 15px 50px 15px;
  grid-template-rows: 14px 52px 14px;
  place-items: center;
  color: #aaa;
  font-size: 11px;
  background: radial-gradient(circle, transparent 28px, #343434 29px, #343434 35px, transparent 36px);
}

.north, .south {
  grid-column: 1 / -1;
}

.face {
  width: 30px;
  height: 30px;
  background: #a9a9ab;
  color: #444;
  font-size: 14px;
}

.wcs {
  position: absolute;
  top: 99px;
  right: 33px;
  width: 31px;
  height: 11px;
  padding-left: 3px;
  justify-content: flex-start;
  border-radius: 3px;
  background: #8a8a8e;
  color: #555;
}

.ucs {
  position: absolute;
  left: 8px;
  bottom: 4px;
  width: 56px;
  height: 52px;
}

.scrollbar {
  width: 12px;
  display: flex;
  flex-direction: column;
  align-items: center;
  background: #f3f3f5;
}

.scroll-up {
  width: 4px;
  height: 3px;
  margin-top: 5px;
  background: #333;
  clip-path: polygon(50% 0, 100% 100%, 0 100%);
}

.thumb {
  width: 10px;
  height: 11px;
  margin: auto 0 186px;
  border: 1px solid #999;
  border-radius: 1px;
  background: linear-gradient(90deg, #fff, #ccc);
}

.palettes-right {
  width: 15px;
  margin-left: 5px;
  display: flex;
  flex-direction: column;
  gap: 2px;
}

.modify { height: 263px; }
.order { height: 95px; }

.hsep {
  height: 1px;
  margin: 2px;
  background: #aaa;
}

/* Command line */
.command {
  display: flex;
  border-top: 1px solid #444;
}

.command-side {
  width: 15px;
  padding: 7px 0 3px;
  display: flex;
  flex-direction: column;
  align-items: center;
  justify-content: space-between;
  background: #4c4c4c;
  color: #fff;
}

.command-side svg {
  width: 11px;
  height: 11px;
}

.command-main {
  flex: 1;
  font-family: var(--song);
}

.history {
  padding: 1px;
  line-height: 10px;
  background: #c8c8c8;
}

.prompt {
  height: 15px;
  padding-left: 3px;
  display: flex;
  align-items: center;
  gap: 2px;
  background: #fff;
}

.prompt svg {
  width: 12px;
  height: 10px;
}

.prompt .caret {
  width: 4px;
  height: 2px;
}

.prompt input {
  flex: 1;
}

.statusbar {
  height: 15px;
  display: flex;
  align-items: center;
  border-top: 1px solid #444;
  background: linear-gradient(#999, #7c7c7c);
}

.coords {
  width: 142px;
  padding-left: 7px;
  font-family: var(--song);
  white-space: pre;
}

.toggles {
  display: flex;
  width: 216px;
  background: #ababab;
}

.toggles button {
  flex: 1;
  height: 14px;
  border: 1px solid #999;
  border-width: 0 1px 0 0;
}

.toggles .on {
  background: #b5deea;
}

.toggles svg {
  width: 12px;
  height: 12px;
}

/* Plot dialog */
.dialog {
  position: absolute;
  left: 347px;
  top: 109px;
  width: 342px;
  padding: 0 3px 3px;
  border: 1px solid #aaa;
  border-radius: 4px;
  background: #2c2c2e;
  box-shadow: 0 0 0 1px #222;
  font-family: var(--song);
}

.dialog-title {
  height: 18px;
  margin: 0 -3px;
  padding: 0 3px;
  display: flex;
  align-items: center;
  gap: 4px;
  border-radius: 3px 3px 0 0;
  background: linear-gradient(90deg, #8a8a8c 0, #77787a 15%, #20262e 30%, #0b1119 55%, #15191f 75%, #55565a 88%, #3c3c40);
  color: #111;
  font-family: var(--ui);
}

.dialog-logo {
  width: 10px;
  height: 10px;
}

.dialog-close {
  width: 31px;
  height: 11px;
  margin: -5px 0 0 auto;
  border: 1px solid #8b3a30;
  border-radius: 0 0 3px 3px;
  background: linear-gradient(#d98b7c, #bc2a17);
  color: #fff;
}

.dialog-body {
  padding: 5px 8px 7px 5px;
  background: #f0f0f0;
  border: 1px solid #fff;
}

fieldset {
  min-width: 0;
  margin: 0;
  padding: 0 6px 6px;
  border: 1px solid #e6e6e6;
}

legend {
  padding: 0;
  margin-left: -2px;
}

.dialog-body button {
  height: 14px;
  border: 1px solid #8c8c8c;
  border-radius: 2px;
  background: linear-gradient(#f4f4f4 45%, #dedede);
}

.dialog-body select {
  display: block;
  height: 14px;
  padding-left: 2px;
  border: 1px solid #8c8c8c;
  border-radius: 1px;
  background: conic-gradient(from -45deg at 50% 100%, #111 90deg, transparent 0) no-repeat right 3px center / 6px 3px, linear-gradient(#f2f2f2, #dcdcdc);
}

.dialog-body input[type="text"] {
  height: 14px;
  padding-left: 3px;
  border: 1px solid #e0e0e0;
  background: #fff;
}

.dialog-body select:disabled {
  color: #888;
  opacity: 1;
  border-color: #c0c0c0;
  background: conic-gradient(from -45deg at 50% 100%, #999 90deg, transparent 0) no-repeat right 3px center / 6px 3px, #f2f2f2;
}

.dialog-body input[type="text"]:disabled {
  color: #888;
  border-color: #c0c0c0;
  background: #f4f4f4;
}

.disabled {
  color: #888;
}

.check {
  display: flex;
  align-items: center;
}

.check input {
  appearance: none;
  width: 9px;
  height: 9px;
  margin-right: 1px;
  border: 1px solid #8e8f8f;
  background: #f6f6f6;
}

.check input:checked::after {
  content: "";
  display: block;
  width: 3px;
  height: 5px;
  margin-left: 2px;
  border: solid #34508c;
  border-width: 0 1px 1px 0;
  transform: rotate(40deg);
}

.check input:disabled {
  border-color: #bbb;
}

.check input:disabled::after {
  border-color: #aaa;
}

.form-grid {
  display: grid;
  grid-template-columns: 41px 193px 64px;
  column-gap: 2px;
  align-items: center;
}

.page-setup .form-grid {
  padding-top: 6px;
}

.page-setup {
  padding-bottom: 7px;
  margin-bottom: 2px;
}

.printer {
  padding-bottom: 4px;
  margin-bottom: 4px;
}

.printer-select {
  position: relative;
  display: flex;
  align-items: center;
  height: 14px;
  border: 1px solid #8c8c8c;
  background: #efefef;
}

.printer-select svg {
  width: 11px;
  height: 10px;
  margin: 0 0 0 2px;
}

.printer-select select {
  flex: 1;
  height: 12px;
  padding-left: 0;
  border: none;
}

.highlight {
  position: absolute;
  left: -3px;
  top: -2px;
  width: 113px;
  height: 16px;
  border: 2px solid #d8292f;
  border-radius: 2px;
}

.printer-info {
  display: grid;
  grid-template-columns: 236px 65px;
  column-gap: 2px;
  padding-top: 4px;
}

.info-row {
  display: grid;
  grid-template-columns: 43px 1fr;
  line-height: 14px;
  white-space: nowrap;
}

.info .check {
  margin-top: 5px;
}

.preview {
  width: 65px;
  height: 58px;
  margin-top: 2px;
}

.preview text {
  fill: #ddd;
  stroke: none;
  font: 8px "Liberation Sans", sans-serif;
}

.paper-row {
  display: grid;
  grid-template-columns: 1fr 86px;
  gap: 5px;
  margin-bottom: 2px;
}

.paper {
  width: 217px;
  margin-top: 2px;
}

.spinner {
  width: 40px;
  margin: 1px 0 0 15px;
  display: flex;
}

.spinner input {
  flex: 1;
}

.spin-buttons button {
  width: 12px;
  height: 7px;
  border-color: #c8c8c8;
}

.area-row {
  display: grid;
  grid-template-columns: 171px 1fr;
  gap: 4px;
}

.area {
  margin-bottom: 2px;
}

.area label {
  display: block;
}

.area select {
  width: 67px;
  margin-top: 2px;
}

.offset {
  display: flex;
  flex-direction: column;
  gap: 5px;
  padding-top: 2px;
  padding-bottom: 5px;
}

.offset-row {
  display: grid;
  grid-template-columns: 11px 46px 30px 1fr;
  column-gap: 4px;
  align-items: center;
}

.scale {
  padding: 1px 6px 4px 5px;
}

.scale .check {
  height: 14px;
}

.scale-grid {
  display: grid;
  grid-template-columns: 31px 40px 56px;
  gap: 4px 2px;
  align-items: center;
  padding-top: 4px;
}

.col2 { grid-column-start: 2; }
.span { grid-column-end: span 2; }

.unit {
  display: flex;
  gap: 2px;
}

.unit select {
  width: 46px;
}

.buttons {
  display: flex;
  gap: 4px;
  margin-top: 7px;
}

.buttons button {
  width: 49px;
}

.buttons .w-preview {
  width: 52px;
  margin-right: 6px;
}

.buttons .w-apply {
  width: 71px;
}

.dialog-body .default {
  border-color: #2a8ea0;
  box-shadow: inset 0 0 0 1px #9be4ee;
}

.dialog-body .more {
  width: 13px;
  border: none;
  background: none;
}

.more svg {
  width: 13px;
  height: 13px;
}

/* Site watermark */
.watermark {
  position: absolute;
  right: 10px;
  bottom: 0;
  width: 230px;
  height: 115px;
  padding-left: 20px;
  display: flex;
  align-items: center;
  background: #fff;
  color: #111;
}

.civil-logo {
  width: 62px;
  height: 50px;
}

.watermark-text {
  display: flex;
  flex-direction: column;
  padding-top: 2px;
}

.watermark strong {
  font-size: 25px;
  line-height: 24px;
  font-weight: 900;
  font-style: italic;
  font-family: "Noto Sans CJK SC", sans-serif;
}

.watermark span {
  font: italic 500 16px/16px "Open Sans", sans-serif;
}
```
